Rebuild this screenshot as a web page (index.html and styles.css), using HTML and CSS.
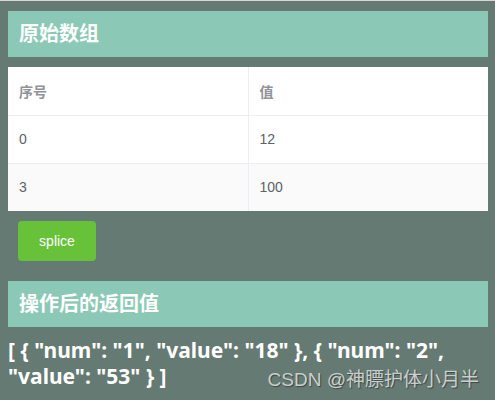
FILE: index.html
```html
<!DOCTYPE html>
<html lang="zh-CN">
<head>
    <meta charset="UTF-8">
    <meta name="viewport" content="width=device-width, initial-scale=1.0">
    <title>splice</title>
    <link rel="stylesheet" href="styles.css">
</head>
<body>
    <div class="container">
        <h2 class="title">原始数组</h2>

        <table class="data-table">
            <thead>
                <tr>
                    <th>序号</th>
                    <th>值</th>
                </tr>
            </thead>
            <tbody>
                <tr>
                    <td>0</td>
                    <td>12</td>
                </tr>
                <tr class="striped">
                    <td>3</td>
                    <td>100</td>
                </tr>
            </tbody>
        </table>

        <button class="splice-btn">splice</button>

        <h2 class="title">操作后的返回值</h2>
        <p class="result">
            <span class="line">[ { "num": "1", "value": "18" }, { "num": "2",</span>
            <span class="line">"value": "53" } ]</span>
        </p>
    </div>

    <div class="watermark">CSDN @神膘护体小月半</div>
</body>
</html>
```

FILE: styles.css
```css
* {
    margin: 0;
    padding: 0;
    box-sizing: border-box;
}

body {
    background-color: #667a74;
    border-top: 1px solid #d6d9d8;
    font-family: "Noto Sans", "Noto Sans CJK SC", sans-serif;
    height: 100vh;
    position: relative;
    overflow: hidden;
}

.container {
    padding: 10px 7px 0 8px;
}

/* 标题栏 */
.title {
    background-color: #8cc8b6;
    color: #fff;
    font-size: 20px;
    font-weight: bold;
    height: 46px;
    line-height: 46px;
    padding-left: 11px;
}

/* 表格 */
.data-table {
    width: 100%;
    margin-top: 10px;
    border-collapse: collapse;
    background-color: #fff;
    font-family: "Liberation Sans", "Noto Sans CJK SC", sans-serif;
    font-size: 14px;
    color: #606266;
}

.data-table th,
.data-table td {
    height: 48px;
    padding: 0 11px;
    text-align: left;
    border-bottom: 1px solid #ebeef5;
}

.data-table th + th,
.data-table td + td {
    border-left: 1px solid #ebeef5;
}

.data-table th {
    color: #909399;
    font-weight: bold;
    font-size: 14px;
}

.data-table th:first-child,
.data-table td:first-child {
    width: 240px;
}

.data-table .striped td {
    background-color: #fafafa;
}

.data-table tbody tr:last-child td {
    border-bottom: none;
}

/* 按钮 */
.splice-btn {
    display: block;
    margin: 10px 0 20px 10px;
    width: 78px;
    height: 40px;
    background-color: #67c23a;
    color: #fff;
    border: none;
    border-radius: 4px;
    font-family: "Liberation Sans", sans-serif;
    font-size: 14px;
    cursor: pointer;
}

/* 返回值 */
.result {
    color: #fff;
    font-size: 21px;
    font-weight: bold;
    line-height: 26px;
    margin-top: 10px;
}

.result .line {
    display: block;
    width: fit-content;
    white-space: nowrap;
}

.watermark {
    position: absolute;
    right: 16px;
    bottom: 9px;
    color: #c9cfcd;
    font-family: "Liberation Sans", "Noto Sans CJK SC", sans-serif;
    font-size: 19px;
    line-height: 22px;
    text-shadow: 1px 1px 1px #3b4744;
}
```
